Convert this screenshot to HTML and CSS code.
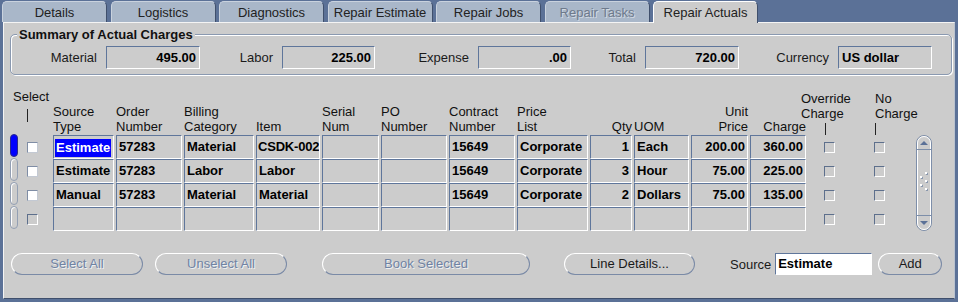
FILE: index.html
```html
<!DOCTYPE html>
<html>
<head>
    <title>Repair Actuals</title>
    <link rel="stylesheet" href="styles.css">
</head>
<body>
    <div class="tabs">
        <div class="tab">Details</div>
        <div class="tab">Logistics</div>
        <div class="tab">Diagnostics</div>
        <div class="tab">Repair Estimate</div>
        <div class="tab">Repair Jobs</div>
        <div class="tab disabled">Repair Tasks</div>
        <div class="tab active">Repair Actuals</div>
    </div>

    <div class="panel">
        <fieldset class="summary">
            <legend>Summary of Actual Charges</legend>
            <div class="summary-row">
                <label>Material</label>
                <div class="field num">495.00</div>
                <label>Labor</label>
                <div class="field num">225.00</div>
                <label>Expense</label>
                <div class="field num">.00</div>
                <label>Total</label>
                <div class="field num">720.00</div>
                <label>Currency</label>
                <div class="field">US dollar</div>
            </div>
        </fieldset>

        <div class="block">
            <!-- header -->
            <div class="hd-check">
                <div class="hd-select">Select</div>
                <div class="bar bar-select"></div>
            </div>
            <div class="hd">Source<br>Type</div>
            <div class="hd">Order<br>Number</div>
            <div class="hd">Billing<br>Category</div>
            <div class="hd">Item</div>
            <div class="hd">Serial<br>Num</div>
            <div class="hd">PO<br>Number</div>
            <div class="hd">Contract<br>Number</div>
            <div class="hd">Price<br>List</div>
            <div class="hd right">Qty</div>
            <div class="hd">UOM</div>
            <div class="hd right">Unit<br>Price</div>
            <div class="hd right">Charge</div>
            <div class="hd-check hd-override">
                <div>Override<br>Charge</div>
                <div class="bar bar-override"></div>
            </div>
            <div class="hd-check hd-nocharge">
                <div>No<br>Charge</div>
                <div class="bar"></div>
            </div>

            <!-- rows -->
            <div class="ind current"></div>
            <div class="chk"></div>
            <div class="cell"><span class="sel">Estimate</span></div>
            <div class="cell">57283</div>
            <div class="cell">Material</div>
            <div class="cell tight">CSDK-002</div>
            <div class="cell"></div>
            <div class="cell"></div>
            <div class="cell">15649</div>
            <div class="cell">Corporate</div>
            <div class="cell num">1</div>
            <div class="cell">Each</div>
            <div class="cell num">200.00</div>
            <div class="cell num">360.00</div>
            <div class="chk empty ovr"></div>
            <div class="chk empty"></div>

            <div class="ind"></div>
            <div class="chk"></div>
            <div class="cell">Estimate</div>
            <div class="cell">57283</div>
            <div class="cell">Labor</div>
            <div class="cell">Labor</div>
            <div class="cell"></div>
            <div class="cell"></div>
            <div class="cell">15649</div>
            <div class="cell">Corporate</div>
            <div class="cell num">3</div>
            <div class="cell">Hour</div>
            <div class="cell num">75.00</div>
            <div class="cell num">225.00</div>
            <div class="chk empty ovr"></div>
            <div class="chk empty"></div>

            <div class="ind"></div>
            <div class="chk"></div>
            <div class="cell">Manual</div>
            <div class="cell">57283</div>
            <div class="cell">Material</div>
            <div class="cell">Material</div>
            <div class="cell"></div>
            <div class="cell"></div>
            <div class="cell">15649</div>
            <div class="cell">Corporate</div>
            <div class="cell num">2</div>
            <div class="cell">Dollars</div>
            <div class="cell num">75.00</div>
            <div class="cell num">135.00</div>
            <div class="chk empty ovr"></div>
            <div class="chk empty"></div>

            <div class="ind"></div>
            <div class="chk empty"></div>
            <div class="cell"></div>
            <div class="cell"></div>
            <div class="cell"></div>
            <div class="cell"></div>
            <div class="cell"></div>
            <div class="cell"></div>
            <div class="cell"></div>
            <div class="cell"></div>
            <div class="cell"></div>
            <div class="cell"></div>
            <div class="cell"></div>
            <div class="cell"></div>
            <div class="chk empty ovr"></div>
            <div class="chk empty"></div>

            <div class="scroll">
                <svg width="16" height="96" viewBox="0 0 16 96">
                    <rect x="0.5" y="0.5" width="15" height="95" rx="7.5" fill="#cccccc" stroke="#7d8ea9"/>
                    <rect x="1.5" y="1.5" width="13" height="93" rx="6.5" fill="none" stroke="#ffffff"/>
                    <line x1="1" y1="14.5" x2="15" y2="14.5" stroke="#7d8ea9"/>
                    <line x1="1" y1="80.5" x2="15" y2="80.5" stroke="#7d8ea9"/>
                    <path d="M4 10 L8 6 L12 10 Z" fill="#5b7197"/>
                    <path d="M4 86 L12 86 L8 90 Z" fill="#5b7197"/>
                    <g fill="#8a98ae">
                        <rect x="10" y="38" width="2" height="2"/>
                        <rect x="5" y="42" width="2" height="2"/>
                        <rect x="10" y="46" width="2" height="2"/>
                        <rect x="5" y="50" width="2" height="2"/>
                        <rect x="10" y="54" width="2" height="2"/>
                    </g>
                    <g fill="#ffffff">
                        <rect x="9" y="37" width="2" height="2"/>
                        <rect x="4" y="41" width="2" height="2"/>
                        <rect x="9" y="45" width="2" height="2"/>
                        <rect x="4" y="49" width="2" height="2"/>
                        <rect x="9" y="53" width="2" height="2"/>
                    </g>
                </svg>
            </div>
        </div>

        <div class="actions">
            <button class="btn btn-select" disabled>Select All</button>
            <button class="btn btn-unselect" disabled>Unselect All</button>
            <button class="btn btn-book" disabled>Book Selected</button>
            <button class="btn btn-details">Line Details...</button>
            <label class="source-label">Source</label>
            <div class="field source-field">Estimate</div>
            <button class="btn btn-add">Add</button>
        </div>
    </div>
</body>
</html>
```

FILE: styles.css
```css
html, body {
    margin: 0;
    height: 302px;
    overflow: hidden;
}
body {
    background-color: #5b7197;
    font-family: "Liberation Sans", Arial, sans-serif;
    font-size: 13px;
    color: #1a1a1a;
}

/* tabs */
.tabs {
    display: flex;
    gap: 3.5px;
    height: 22px;
    padding: 1px 0 0 2px;
    box-sizing: border-box;
}
.tab {
    flex: 0 0 105px;
    height: 21px;
    box-sizing: border-box;
    padding-top: 1px;
    line-height: 19px;
    text-align: center;
    color: #222;
    background-color: #a9b7c9;
    border: 1px solid #c9d2de;
    border-right-color: #3f4f6c;
    border-bottom: none;
    border-radius: 5px 5px 0 0;
}
.tab.disabled {
    color: #6e7a8c;
    text-shadow: 1px 1px 0 #d3dae3;
}
.tab.active {
    height: 22px;
    background-color: #cccccc;
    border-color: #ffffff #3f4f6c #ffffff #ffffff;
    position: relative;
    z-index: 1;
}

/* canvas */
.panel {
    height: 277px;
    margin: 0 3px;
    box-sizing: border-box;
    background-color: #cccccc;
    border: 1px solid #f4f4f4;
    border-right-color: #b9c2cf;
    border-bottom-color: #3f4f6c;
}

/* summary */
.summary {
    margin: 4px 2px 0 6px;
    padding: 4px 0 5px 0;
    border: 1px solid #8a99b0;
    border-radius: 5px;
    box-shadow: inset 1px 1px 0 #ffffff, 1px 1px 0 #ffffff;
    min-width: 0;
}
.summary legend {
    margin-left: 6px;
    padding: 0 2px;
    line-height: 15px;
    font-weight: bold;
    color: #111;
    background-color: #cccccc;
}
.summary-row {
    display: grid;
    grid-template-columns: 86px 94px 64px 93px 85px 93px 56px 94px 81px 94px;
    column-gap: 9px;
    align-items: center;
}
.summary-row label {
    text-align: right;
}
.field {
    height: 23px;
    box-sizing: border-box;
    padding: 0 3px;
    line-height: 21px;
    font-weight: bold;
    color: #000;
    white-space: nowrap;
    overflow: hidden;
    border: 1px solid;
    border-color: #5f769b #ffffff #ffffff #5f769b;
}
.num {
    text-align: right;
}

/* multi-row block */
.block {
    display: grid;
    grid-template-columns: 15px 24px 61px 66px 70px 64px 57px 66px 66px 71px 42px 55px 57px 56px 64px 40px 15px;
    grid-template-rows: 46px repeat(4, 24px);
    column-gap: 2px;
    margin: 14px 0 0 6px;
}
.hd {
    align-self: end;
    line-height: 15px;
    padding-bottom: 1px;
    white-space: nowrap;
    color: #111;
}
.hd.right {
    text-align: right;
}
.hd-check {
    line-height: 15px;
    white-space: nowrap;
    color: #111;
}
.hd-check:first-child {
    grid-column: span 2;
}
.hd-select {
    padding-left: 3px;
}
.bar {
    width: 1px;
    height: 12px;
    margin-top: 2px;
    background-color: #222;
}
.bar-select {
    height: 13px;
    margin: 5px 0 0 17px;
}
.hd-override {
    margin-left: -7px;
    padding-top: 2px;
}
.bar-override {
    margin-left: 24px;
}
.hd-nocharge {
    padding-top: 2px;
    padding-left: 1px;
}

.ind {
    grid-column: 1;
    align-self: start;
    margin-top: -1px;
    width: 8px;
    height: 23px;
    box-sizing: border-box;
    border: 1px solid #939fb3;
    border-radius: 4px;
    box-shadow: inset 1px 1px 0 #ffffff;
}
.ind.current {
    background-color: #0000ff;
    border-color: #2a2a8c;
    box-shadow: none;
}
.chk {
    align-self: center;
    width: 11px;
    height: 11px;
    box-sizing: border-box;
    background-color: #ffffff;
    border: 1px solid;
    border-color: #7f8da5 #c3c9d3 #c3c9d3 #7f8da5;
}
.chk.empty {
    background-color: #cccccc;
    border-color: #5d6f8c #ffffff #ffffff #5d6f8c;
}
.chk.ovr {
    margin-left: 16px;
}
.cell {
    box-sizing: border-box;
    padding: 0 2px;
    line-height: 22px;
    font-weight: bold;
    color: #000;
    white-space: nowrap;
    overflow: hidden;
    border: 1px solid;
    border-color: #5f769b #ffffff #ffffff #5f769b;
}
.cell.tight {
    padding: 0 0 0 1px;
    letter-spacing: -0.2px;
}
.sel {
    display: inline-block;
    vertical-align: middle;
    margin-left: -1px;
    padding: 0 1px;
    line-height: 18px;
    background-color: #0000ff;
    color: #ffffff;
}
.scroll {
    grid-column: 17;
    grid-row: 2 / 6;
}
.scroll svg {
    display: block;
}

/* buttons */
.actions {
    display: flex;
    align-items: center;
    margin: 22px 0 0 7px;
}
.btn {
    height: 22px;
    box-sizing: border-box;
    padding: 0;
    font: inherit;
    line-height: 20px;
    color: #1a1a1a;
    background-color: #cccccc;
    border: 1px solid;
    border-color: #ffffff #7a8aa6 #7a8aa6 #ffffff;
    border-radius: 11px;
}
.btn:disabled {
    color: #7083a3;
    text-shadow: 1px 1px 0 #eef0f3;
}
.btn-select {
    width: 132px;
}
.btn-unselect {
    width: 132px;
    margin-left: 12px;
}
.btn-book {
    width: 208px;
    margin-left: 35px;
}
.btn-details {
    width: 131px;
    margin-left: 34px;
}
.source-label {
    margin-left: 35px;
}
.source-field {
    width: 97px;
    height: 22px;
    line-height: 20px;
    margin-left: 4px;
    padding: 0 2px;
    background-color: #ffffff;
}
.btn-add {
    width: 64px;
    margin-left: 6px;
}
```
